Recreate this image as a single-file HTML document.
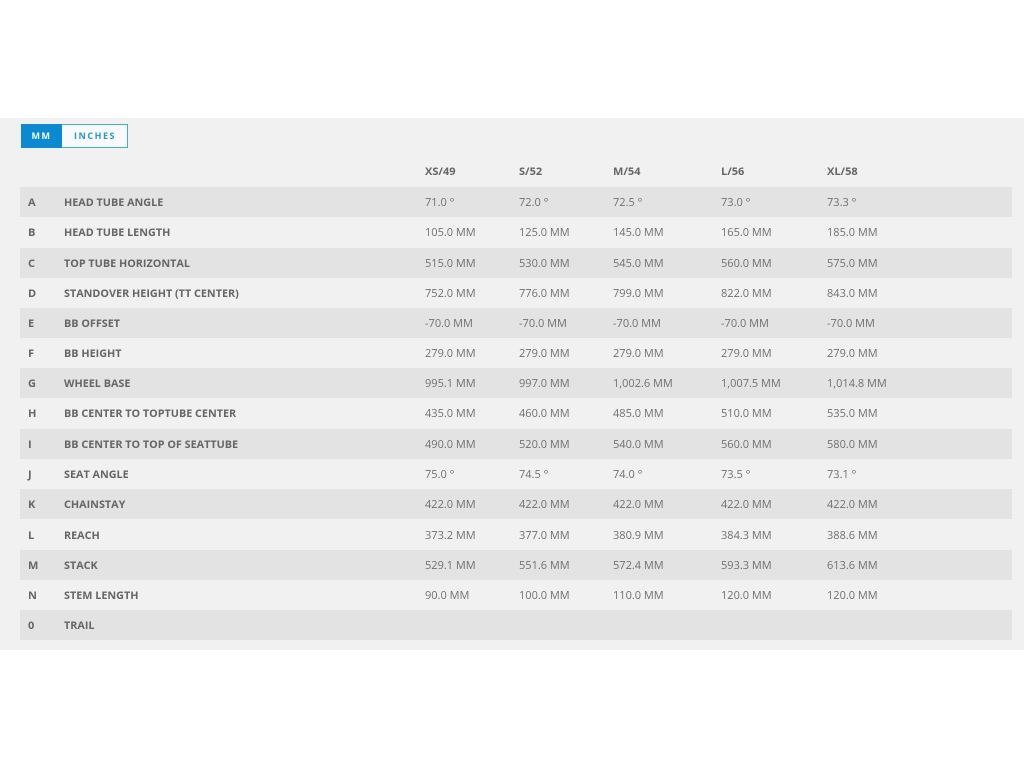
<!DOCTYPE html>
<html><head><style>
html,body{margin:0;padding:0;background:#fff;width:1024px;height:768px;overflow:hidden}
body{font-family:"Open Sans","Liberation Sans",sans-serif;}
.sec{position:absolute;left:0;top:118px;width:1024px;height:532px;background:#f1f1f1}
.btns{position:absolute;left:21px;top:124px;height:24px;width:107px;box-sizing:border-box;border:1px solid #4aa8dc;background:#f7f9fb;font-size:9px;font-weight:bold;letter-spacing:1.5px}
.mm{position:absolute;left:-1px;top:-1px;width:41px;height:24px;background:#0a8ad0;color:#fff;line-height:24px;text-align:center}
.in{position:absolute;left:40px;top:0;width:66px;height:22px;line-height:22px;text-align:center;color:#2a96d4}
.row{position:absolute;left:20px;width:992px;height:30px;font-size:11px;color:#707070;line-height:32px}
.row.o{background:#e3e3e3}
.row span{position:absolute;top:0}
.l{left:8px;font-weight:bold;color:#666}
.n{left:44px;font-weight:bold;color:#666;font-size:10.8px}
.c1{left:405px}.c2{left:499px}.c3{left:593px}.c4{left:701px}.c5{left:807px}
.h span{font-weight:bold;color:#666}
</style></head><body>
<div class="sec"></div>
<div class="btns"><div class="mm">MM</div><div class="in">INCHES</div></div>
<div class="row h" style="top:156px"><span class="c1">XS/49</span><span class="c2">S/52</span><span class="c3">M/54</span><span class="c4">L/56</span><span class="c5">XL/58</span></div>
<div class="row o" style="top:187px"><span class="l">A</span><span class="n">HEAD TUBE ANGLE</span><span class="c1">71.0 °</span><span class="c2">72.0 °</span><span class="c3">72.5 °</span><span class="c4">73.0 °</span><span class="c5">73.3 °</span></div>
<div class="row" style="top:217px"><span class="l">B</span><span class="n">HEAD TUBE LENGTH</span><span class="c1">105.0 MM</span><span class="c2">125.0 MM</span><span class="c3">145.0 MM</span><span class="c4">165.0 MM</span><span class="c5">185.0 MM</span></div>
<div class="row o" style="top:248px"><span class="l">C</span><span class="n">TOP TUBE HORIZONTAL</span><span class="c1">515.0 MM</span><span class="c2">530.0 MM</span><span class="c3">545.0 MM</span><span class="c4">560.0 MM</span><span class="c5">575.0 MM</span></div>
<div class="row" style="top:278px"><span class="l">D</span><span class="n">STANDOVER HEIGHT (TT CENTER)</span><span class="c1">752.0 MM</span><span class="c2">776.0 MM</span><span class="c3">799.0 MM</span><span class="c4">822.0 MM</span><span class="c5">843.0 MM</span></div>
<div class="row o" style="top:308px"><span class="l">E</span><span class="n">BB OFFSET</span><span class="c1">-70.0 MM</span><span class="c2">-70.0 MM</span><span class="c3">-70.0 MM</span><span class="c4">-70.0 MM</span><span class="c5">-70.0 MM</span></div>
<div class="row" style="top:338px"><span class="l">F</span><span class="n">BB HEIGHT</span><span class="c1">279.0 MM</span><span class="c2">279.0 MM</span><span class="c3">279.0 MM</span><span class="c4">279.0 MM</span><span class="c5">279.0 MM</span></div>
<div class="row o" style="top:368px"><span class="l">G</span><span class="n">WHEEL BASE</span><span class="c1">995.1 MM</span><span class="c2">997.0 MM</span><span class="c3">1,002.6 MM</span><span class="c4">1,007.5 MM</span><span class="c5">1,014.8 MM</span></div>
<div class="row" style="top:398px"><span class="l">H</span><span class="n">BB CENTER TO TOPTUBE CENTER</span><span class="c1">435.0 MM</span><span class="c2">460.0 MM</span><span class="c3">485.0 MM</span><span class="c4">510.0 MM</span><span class="c5">535.0 MM</span></div>
<div class="row o" style="top:429px"><span class="l">I</span><span class="n">BB CENTER TO TOP OF SEATTUBE</span><span class="c1">490.0 MM</span><span class="c2">520.0 MM</span><span class="c3">540.0 MM</span><span class="c4">560.0 MM</span><span class="c5">580.0 MM</span></div>
<div class="row" style="top:459px"><span class="l">J</span><span class="n">SEAT ANGLE</span><span class="c1">75.0 °</span><span class="c2">74.5 °</span><span class="c3">74.0 °</span><span class="c4">73.5 °</span><span class="c5">73.1 °</span></div>
<div class="row o" style="top:489px"><span class="l">K</span><span class="n">CHAINSTAY</span><span class="c1">422.0 MM</span><span class="c2">422.0 MM</span><span class="c3">422.0 MM</span><span class="c4">422.0 MM</span><span class="c5">422.0 MM</span></div>
<div class="row" style="top:520px"><span class="l">L</span><span class="n">REACH</span><span class="c1">373.2 MM</span><span class="c2">377.0 MM</span><span class="c3">380.9 MM</span><span class="c4">384.3 MM</span><span class="c5">388.6 MM</span></div>
<div class="row o" style="top:550px"><span class="l">M</span><span class="n">STACK</span><span class="c1">529.1 MM</span><span class="c2">551.6 MM</span><span class="c3">572.4 MM</span><span class="c4">593.3 MM</span><span class="c5">613.6 MM</span></div>
<div class="row" style="top:580px"><span class="l">N</span><span class="n">STEM LENGTH</span><span class="c1">90.0 MM</span><span class="c2">100.0 MM</span><span class="c3">110.0 MM</span><span class="c4">120.0 MM</span><span class="c5">120.0 MM</span></div>
<div class="row o" style="top:610px"><span class="l">0</span><span class="n">TRAIL</span></div>
</body></html>
